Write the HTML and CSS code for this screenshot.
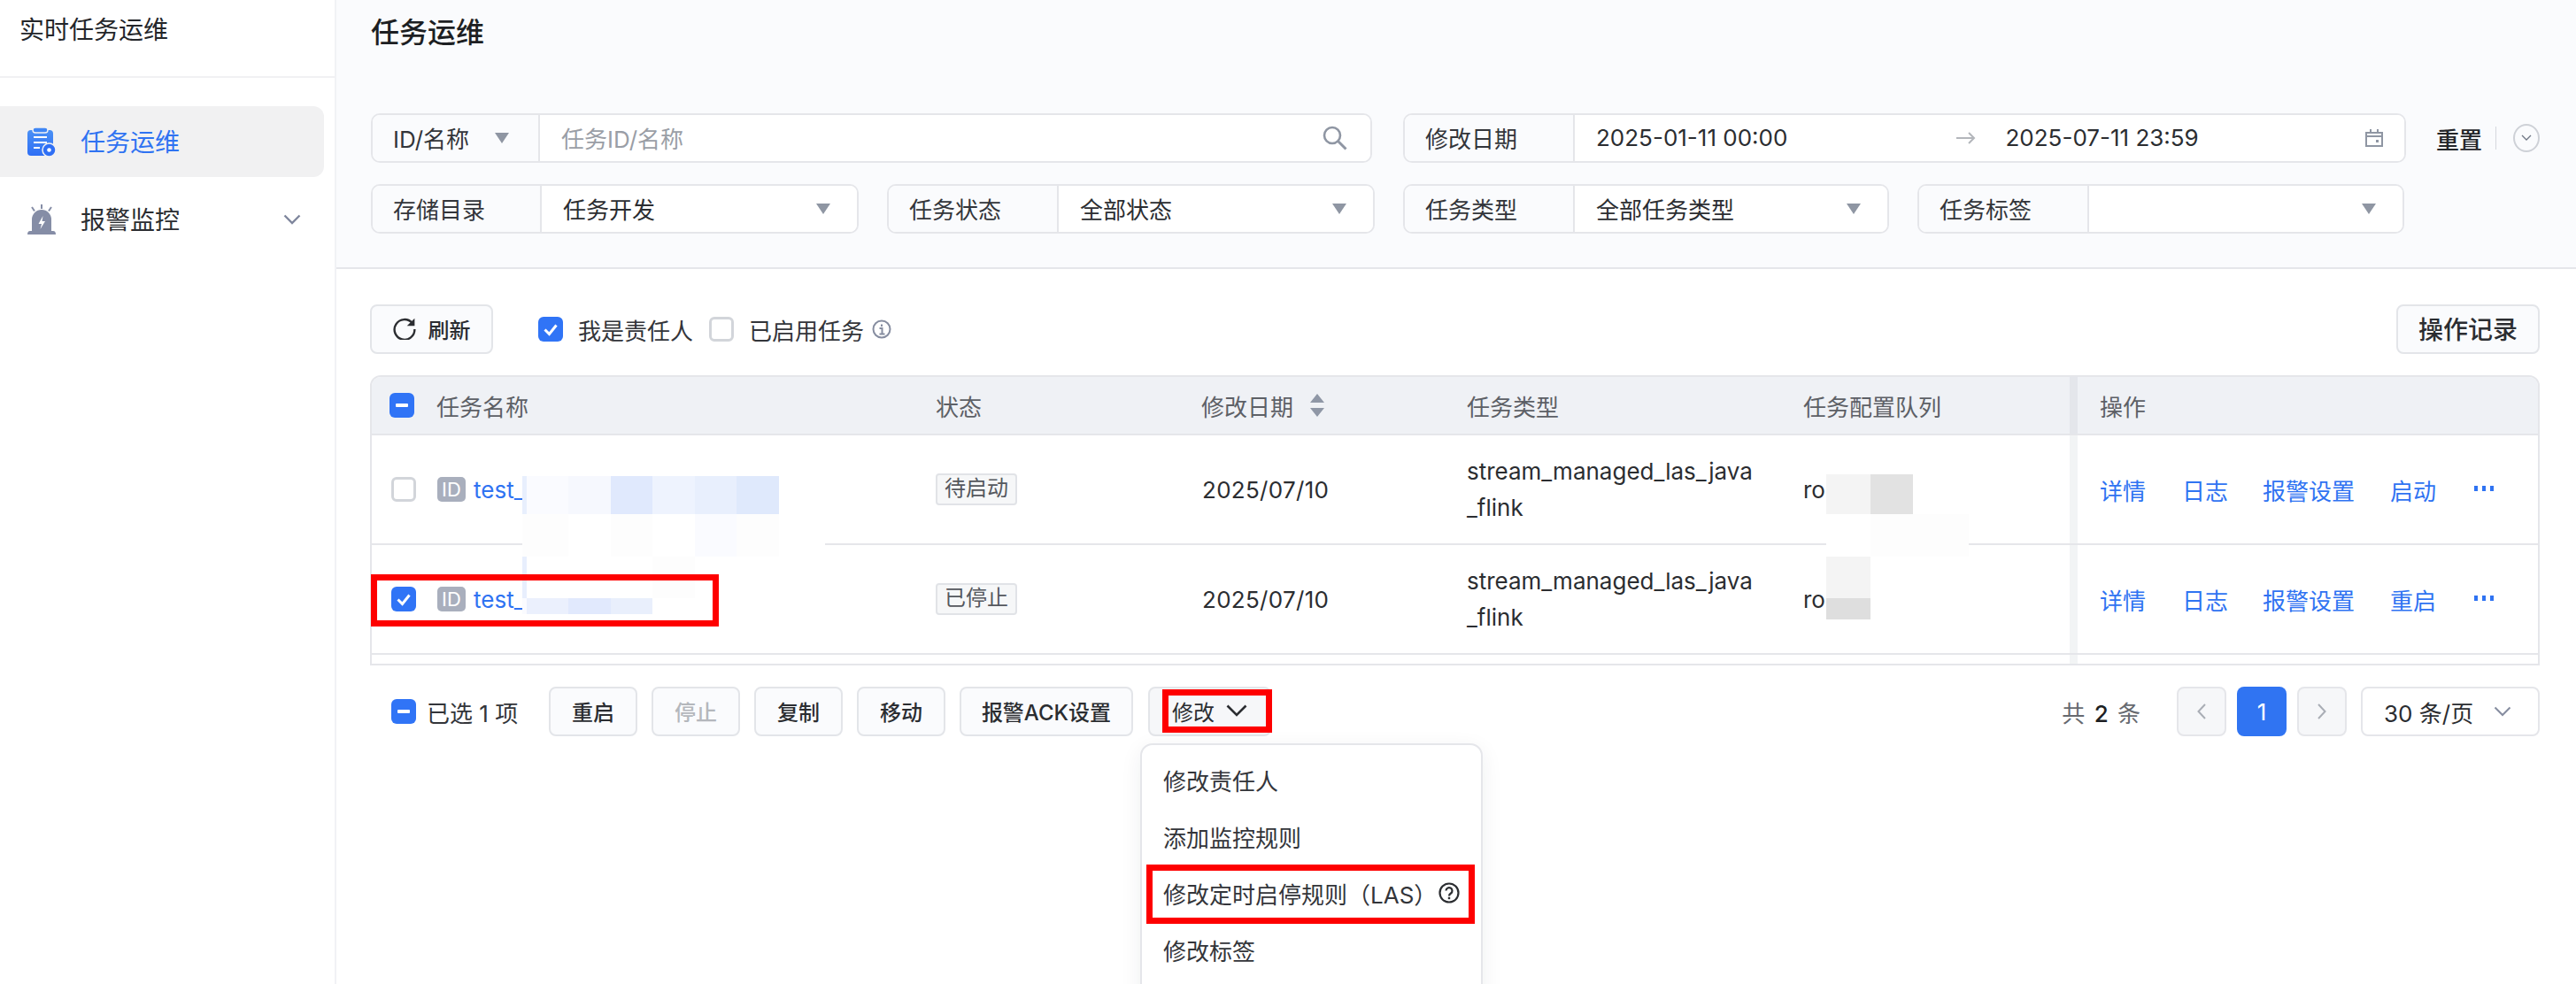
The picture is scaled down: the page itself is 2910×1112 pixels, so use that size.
FILE: index.html
```html
<!DOCTYPE html>
<html lang="zh-CN">
<head>
<meta charset="utf-8">
<title>实时任务运维</title>
<link rel="stylesheet" href="styles.css">
</head>
<body>
<div class="page">
  <aside class="sidebar">
    <div class="side-title">实时任务运维</div>
    <nav class="side-nav">
      <a class="side-item active">
        <svg class="side-icon" viewBox="0 0 32 32"><defs><linearGradient id="g" x1="0" y1="0" x2="0" y2="1"><stop offset="0" stop-color="#4a90f5"/><stop offset="1" stop-color="#2f6ff5"/></linearGradient></defs><rect x="0" y="3" width="29" height="29" rx="4" fill="url(#g)"/><rect x="6" y="0" width="17" height="6" rx="3" fill="#3f86f5" stroke="#f1f1f2" stroke-width="1.4"/><path d="M7 11h15M7 17h15M7 23h7" stroke="#fff" stroke-width="2" fill="none"/><circle cx="24.500" cy="25.500" r="7.500" fill="#2f6ff5" stroke="#f1f1f2" stroke-width="1.500"/><circle cx="24.500" cy="25.500" r="2.300" fill="#fff"/></svg>
        <span>任务运维</span>
      </a>
      <a class="side-item">
        <svg class="side-icon" viewBox="0 0 32 34"><path d="M16 0v5M5 3l3 4.500M27 3l-3 4.500" stroke="#858da6" stroke-width="2" fill="none"/><path d="M5 30V17a11 11 0 0 1 22 0v13z" fill="#858da6"/><path d="M0 34c0-2.500 1-4 3-4h26c2 0 3 1.500 3 4z" fill="#858da6"/><path d="M17.500 13l-5 9h3.500l-1.500 6 5.500-9h-3.500z" fill="#fff"/></svg>
        <span class="side-text">报警监控</span>
        <svg class="side-chev" viewBox="0 0 20 12"><path d="M1.500 1.500L10 10l8.500-8.500" stroke="#7f869d" stroke-width="2.400" fill="none"/></svg>
      </a>
    </nav>
  </aside>

  <main class="main">
    <section class="top">
      <h1 class="page-title">任务运维</h1>
      <div class="filter-row">
        <div class="group w-id">
          <div class="g-label l-id"><span>ID/名称</span><i class="tri"></i></div>
          <div class="g-value"><span class="placeholder">任务ID/名称</span>
            <svg class="search" viewBox="0 0 28 28"><circle cx="11" cy="11" r="9" fill="none" stroke="#8f96a3" stroke-width="2.600"/><path d="M17.500 17.500L26.500 26.500" stroke="#8f96a3" stroke-width="3"/></svg>
          </div>
        </div>
        <div class="group w-date">
          <div class="g-label l-std">修改日期</div>
          <div class="g-value date">
            <span class="d-from">2025-01-11 00:00</span>
            <svg class="d-arrow" viewBox="0 0 22 14"><path d="M0 7h20M14 1l6 6-6 6" stroke="#b3b6bb" stroke-width="2" fill="none"/></svg>
            <span class="d-to">2025-07-11 23:59</span>
            <svg class="cal" viewBox="0 0 20 20"><path d="M1 4h18v15H1zM1 8h18M6 0v4M14 0v4" stroke="#8f96a3" stroke-width="2" fill="none"/><rect x="12" y="12" width="3" height="3" fill="#8f96a3"/></svg>
          </div>
        </div>
        <div class="reset">
          <span class="reset-text">重置</span><i class="reset-sep"></i>
          <span class="circle"><svg viewBox="0 0 12 8"><path d="M1 1l5 5 5-5" stroke="#6f7684" stroke-width="1.300" fill="none"/></svg></span>
        </div>
      </div>
      <div class="filter-row row2">
        <div class="group w-a"><div class="g-label l-store">存储目录</div><div class="g-value"><span>任务开发</span><i class="tri end"></i></div></div>
        <div class="group w-a"><div class="g-label l-status">任务状态</div><div class="g-value"><span>全部状态</span><i class="tri end"></i></div></div>
        <div class="group w-b"><div class="g-label l-std">任务类型</div><div class="g-value"><span>全部任务类型</span><i class="tri end"></i></div></div>
        <div class="group w-c"><div class="g-label l-std">任务标签</div><div class="g-value"><i class="tri end"></i></div></div>
      </div>
    </section>

    <section class="content">
      <div class="toolbar">
        <button class="btn refresh"><svg viewBox="0 0 24 24"><path d="M20 6.500A10.500 10.500 0 1 0 22.500 13" stroke="#2b2d31" stroke-width="2.200" fill="none"/><path d="M22.500 1.500v8h-8z" fill="#2b2d31"/></svg>刷新</button>
        <label class="check-label first"><i class="cb on"><svg viewBox="0 0 28 28"><path d="M7.500 14.500l5 5 8-10" stroke="#fff" stroke-width="3" fill="none"/></svg></i><span>我是责任人</span></label>
        <label class="check-label"><i class="cb"></i><span>已启用任务</span></label>
        <svg class="info" viewBox="0 0 22 22"><circle cx="11" cy="11" r="9.500" fill="none" stroke="#868da0" stroke-width="2"/><path d="M11 5.500v2.400M8.500 10H11.500V16M8.500 16.500h6" stroke="#868da0" stroke-width="2" fill="none"/></svg>
        <button class="btn log">操作记录</button>
      </div>

      <div class="table">
        <div class="tr head">
          <div class="td name head-name"><i class="cb on"><b class="dash"></b></i><span class="name-title">任务名称</span></div>
          <div class="td">状态</div>
          <div class="td">修改日期<svg class="sort" viewBox="0 0 16 26"><path d="M8 0l8 10H0zM8 26l8-10H0z" fill="#8f97a6"/></svg></div>
          <div class="td">任务类型</div>
          <div class="td">任务配置队列</div>
          <div class="td ops">操作</div>
        </div>
        <div class="tr">
          <div class="td name"><i class="cb"></i><span class="id-badge">ID</span><a class="link">test_</a></div>
          <div class="td"><span class="tag">待启动</span></div>
          <div class="td date-cell">2025/07/10</div>
          <div class="td type">stream_managed_las_java<br>_flink</div>
          <div class="td">ro</div>
          <div class="td ops actions"><a>详情</a><a>日志</a><a>报警设置</a><a>启动</a><svg class="dots" viewBox="0 0 24 6"><path d="M1 0h4v6H1zM10 0h4v6h-4zM19 0h4v6h-4z" fill="#2f73f2"/></svg></div>
        </div>
        <div class="tr">
          <div class="td name"><i class="cb on"><svg viewBox="0 0 28 28"><path d="M7.500 14.500l5 5 8-10" stroke="#fff" stroke-width="3" fill="none"/></svg></i><span class="id-badge">ID</span><a class="link">test_</a></div>
          <div class="td"><span class="tag">已停止</span></div>
          <div class="td date-cell">2025/07/10</div>
          <div class="td type">stream_managed_las_java<br>_flink</div>
          <div class="td">ro</div>
          <div class="td ops actions"><a>详情</a><a>日志</a><a>报警设置</a><a>重启</a><svg class="dots" viewBox="0 0 24 6"><path d="M1 0h4v6H1zM10 0h4v6h-4zM19 0h4v6h-4z" fill="#2f73f2"/></svg></div>
        </div>
        <div class="tr filler"><div class="td fill-a"></div><div class="td ops"></div></div>
      </div>

      <div class="bottom">
        <i class="cb on"><b class="dash"></b></i>
        <span class="selected">已选 1 项</span>
        <button class="btn sm">重启</button>
        <button class="btn sm disabled">停止</button>
        <button class="btn sm">复制</button>
        <button class="btn sm">移动</button>
        <button class="btn sm ack">报警ACK设置</button>
        <button class="btn sm more">修改<svg viewBox="0 0 24 14"><path d="M1.500 1.500L12 12 22.500 1.500" stroke="#2b2d31" stroke-width="2.600" fill="none"/></svg></button>
        <div class="pager">
          <span class="total">共 <b>2</b> 条</span>
          <span class="pg off"><svg viewBox="0 0 10 18"><path d="M9 1L1.500 9 9 17" stroke="#a9adb5" stroke-width="2" fill="none"/></svg></span>
          <span class="pg cur">1</span>
          <span class="pg off"><svg viewBox="0 0 10 18"><path d="M1 1l7.500 8L1 17" stroke="#a9adb5" stroke-width="2" fill="none"/></svg></span>
          <span class="size">30 条/页<svg viewBox="0 0 20 12"><path d="M1.500 1.500L10 10l8.500-8.500" stroke="#868da0" stroke-width="2" fill="none"/></svg></span>
        </div>
      </div>
    </section>
  </main>

  <svg class="mosaic" viewBox="0 0 2910 1112" shape-rendering="crispEdges">
    <rect x="590" y="581" width="342" height="48" fill="#fff"/>
    <rect x="590" y="538" width="5" height="43" fill="#e8effd"/>
    <rect x="595" y="538" width="47" height="43" fill="#fafbff"/>
    <rect x="642" y="538" width="48" height="43" fill="#f6f8fe"/>
    <rect x="690" y="538" width="47" height="43" fill="#e0e9fd"/>
    <rect x="737" y="538" width="48" height="43" fill="#eef3fe"/>
    <rect x="785" y="538" width="47" height="43" fill="#e8effd"/>
    <rect x="832" y="538" width="48" height="43" fill="#dfe9fc"/>
    <rect x="590" y="581" width="52" height="48" fill="#fdfdfd"/>
    <rect x="690" y="581" width="47" height="48" fill="#fdfdfd"/>
    <rect x="785" y="581" width="47" height="48" fill="#fafbff"/>
    <rect x="832" y="581" width="48" height="48" fill="#fdfdfd"/>
    <rect x="590" y="629" width="5" height="47" fill="#e8effd"/>
    <rect x="737" y="629" width="48" height="47" fill="#fdfdfd"/>
    <rect x="590" y="676" width="5" height="18" fill="#fafbff"/>
    <rect x="595" y="676" width="47" height="18" fill="#ebf0fd"/>
    <rect x="642" y="676" width="48" height="18" fill="#e1e9fd"/>
    <rect x="690" y="676" width="47" height="18" fill="#e9effc"/>
    <rect x="2063" y="536" width="50" height="45" fill="#f4f4f4"/>
    <rect x="2113" y="536" width="48" height="45" fill="#e2e2e2"/>
    <rect x="2063" y="581" width="50" height="48" fill="#fff"/>
    <rect x="2113" y="581" width="111" height="48" fill="#fdfdfd"/>
    <rect x="2063" y="629" width="50" height="47" fill="#f4f4f4"/>
    <rect x="2063" y="676" width="50" height="24" fill="#dedede"/>
  </svg>

  <div class="dropdown">
    <div class="dd-item">修改责任人</div>
    <div class="dd-item">添加监控规则</div>
    <div class="dd-item">修改定时启停规则（LAS）<svg class="help" viewBox="0 0 24 24"><circle cx="12" cy="12" r="10.500" fill="none" stroke="#2b2d31" stroke-width="2.200"/><path d="M8.500 9.500a3.500 3.500 0 1 1 5.500 3c-1.300.9-2 1.500-2 3" stroke="#2b2d31" stroke-width="2.200" fill="none"/><rect x="10.800" y="16.800" width="2.400" height="2.400" fill="#2b2d31"/></svg></div>
    <div class="dd-item">修改标签</div>
  </div>

  <i class="mark mark-row"></i>
  <i class="mark mark-btn"></i>
  <i class="mark mark-item"></i>
</div>
</body>
</html>
```
FILE: styles.css
```css
* { box-sizing: border-box; }
html, body { margin: 0; height: 100%; overflow: hidden; background: #fff; }
body { font-family: "Inter", "Noto Sans CJK SC", sans-serif; font-size: 26px; color: #2b2d31; }
svg { display: block; flex: none; }
i { font-style: normal; display: block; }
button { font-family: inherit; }

.page { position: relative; display: flex; width: 2910px; height: 1112px; overflow: hidden; }

/* sidebar */
.sidebar { width: 380px; flex: none; border-right: 2px solid #f1f2f5; }
.side-title { height: 88px; padding: 15px 0 0 22px; font-size: 28px; line-height: 38px; border-bottom: 2px solid #f1f1f3; color: #24262a; }
.side-nav { padding-top: 32px; display: flex; flex-direction: column; gap: 8px; }
.side-item { display: flex; align-items: center; width: 366px; height: 80px; padding-left: 31px; font-size: 28px; border-radius: 0 12px 12px 0; }
.side-item span { padding-bottom: 2px; }
.side-item.active { background: #f1f1f2; color: #2f73f2; }
.side-icon { width: 32px; height: 34px; margin-right: 28px; }
.side-text { flex: 1; }
.side-chev { width: 20px; height: 12px; margin-right: 26px; }

/* main */
.main { flex: 1; min-width: 0; display: flex; flex-direction: column; }
.top { height: 304px; padding: 0 41px 0 39px; background: #fafbfd; border-bottom: 2px solid #e5e6ea; }
.page-title { margin: 0; height: 74px; font-size: 32px; line-height: 74px; font-weight: 500; color: #1d1f23; }
.filter-row { display: flex; margin-top: 54px; gap: 35px; }
.row2 { margin-top: 24px; gap: 32px; }

.group { display: flex; height: 56px; border: 2px solid #e5e6ea; border-radius: 10px; overflow: hidden; background: #fff; }
.w-id { width: 1131px; }
.w-date { width: 1133px; }
.w-a { width: 551px; }
.w-b { width: 549px; }
.w-c { width: 550px; }
.g-label { flex: none; display: flex; align-items: center; padding: 0 0 1px 23px; background: #fafbfd; border-right: 2px solid #e5e6ea; color: #33353a; }
.l-id { width: 189px; }
.l-id span { flex: 1; }
.l-id .tri { margin-right: 33px; }
.l-std { width: 192px; }
.l-store { width: 191px; }
.l-status { width: 192px; }
.g-value { flex: 1; display: flex; align-items: center; padding: 0 30px 1px 24px; background: #fff; min-width: 0; }
.g-value > span:first-child { flex: 1; }
.placeholder { color: #9a9ea6; }
.tri { width: 0; height: 0; border-left: 8px solid transparent; border-right: 8px solid transparent; border-top: 12px solid #8f96a3; flex: none; }
.tri.end { margin-left: auto; }
.search { width: 28px; height: 28px; margin-right: -4px; }
.date { padding-right: 24px; }
.date .d-from { flex: none; width: 408px; }
.d-arrow { width: 22px; height: 14px; margin-right: 34px; }
.date .d-to { flex: 1; }
.cal { width: 20px; height: 24px; }
.reset { display: flex; align-items: center; margin-left: -1px; }
.reset-text { font-weight: 500; font-size: 26px; margin-right: 15px; color: #24262a; }
.reset-sep { width: 1px; height: 26px; background: #d5d8dd; margin-right: 19px; }
.circle { width: 30px; height: 32px; border: 2px solid #ced1d7; border-radius: 50%; display: flex; align-items: center; justify-content: center; }
.circle svg { width: 12px; height: 8px; }

/* toolbar */
.content { padding: 40px 41px 0 38px; }
.toolbar { display: flex; align-items: center; height: 56px; }
.btn { display: inline-flex; align-items: center; justify-content: center; height: 56px; padding: 0 0 2px; border: 2px solid #e3e5e9; border-radius: 8px; background: #fafbfd; color: #2b2d31; font-size: 26px; font-weight: 500; }
.refresh { width: 139px; gap: 14px; font-size: 24px; }
.refresh svg { width: 26px; height: 26px; }
.log { width: 162px; margin-left: auto; font-size: 28px; }
.check-label { display: flex; align-items: center; gap: 17px; margin-right: 18px; color: #33353a; }
.first { margin-left: 51px; }
.cb { width: 28px; height: 28px; flex: none; border: 3px solid #d2d5da; border-radius: 6px; background: #fff; display: flex; align-items: center; justify-content: center; }
.cb.on { background: #3074f6; border: 0; }
.cb svg { width: 28px; height: 28px; }
.dash { width: 14px; height: 4px; background: #fff; border-radius: 1px; display: block; }
.info { width: 22px; height: 22px; margin-left: -9px; }

/* table */
.table { margin-top: 24px; border: 2px solid #e5e6ea; border-radius: 12px 12px 0 0; overflow: hidden; }
.tr { display: grid; grid-template-columns: 615px 300px 300px 380px 323px 1fr; height: 124px; border-bottom: 2px solid #e5e6ea; }
.tr.head { height: 66px; background: #eff1f5; color: #5d6066; }
.td { display: flex; align-items: center; padding-left: 22px; min-width: 0; }
.head-name { padding-left: 20px; }
.name-title { margin-left: 25px; }
.name .cb + .id-badge { margin-left: 24px; }
.sort { width: 16px; height: 26px; margin-left: 19px; }
.date-cell { padding-left: 23px; letter-spacing: .3px; }
.id-badge { width: 32px; height: 28px; border-radius: 5px; background: #a9afbd; color: #fff; font-size: 22px; line-height: 28px; text-align: center; flex: none; }
.link { margin-left: 9px; color: #2f73f2; }
.tag { height: 36px; padding: 0 8px; border: 2px solid #e1e3e7; border-radius: 4px; background: #f6f7f8; color: #55585e; font-size: 24px; line-height: 30px; }
.type { line-height: 41px; display: block; align-self: center; }
.ops { border-left: 9px solid #f2f4f5; padding-left: 25px; }
.head .ops { border-left-color: #e4e6eb; }
.actions { color: #2f73f2; }
.actions a:nth-child(1) { margin-right: 41px; }
.actions a:nth-child(2) { margin-right: 39px; }
.actions a:nth-child(3) { margin-right: 40px; }
.actions a:nth-child(4) { margin-right: 42px; }
.dots { width: 24px; height: 6px; margin-top: -2px; }
.tr.filler { height: 10px; border-bottom: 0; grid-template-columns: 1918px 1fr; }
.fill-a { padding: 0; }

/* bottom */
.bottom { display: flex; align-items: center; height: 56px; margin-top: 24px; padding-left: 24px; gap: 16px; }
.bottom > .cb { margin-right: -4px; }
.selected { margin-right: 17px; color: #33353a; width: 105px; white-space: nowrap; }
.sm { width: 100px; font-size: 24px; }
.ack { width: 196px; margin-right: 1px; }
.more { width: 139px; justify-content: flex-start; padding-left: 25px; gap: 13px; background: #f6f7f9; font-weight: 400; }
.more svg { width: 24px; height: 14px; margin-top: -1px; }
.disabled { color: #b4b7bc; }
.pager { margin-left: auto; display: flex; align-items: center; gap: 12px; }
.total { margin-right: 29px; color: #66696f; word-spacing: 3px; }
.total b { font-weight: 500; color: #1d1f23; }
.pg { width: 56px; height: 56px; border-radius: 8px; display: flex; align-items: center; justify-content: center; }
.pg svg { width: 10px; height: 18px; }
.off { background: #f6f7f9; border: 2px solid #e5e6ea; }
.cur { background: #3074f2; color: #fff; }
.size { width: 202px; height: 56px; margin-left: 4px; padding: 0 30px 0 24px; border: 2px solid #e5e6ea; border-radius: 8px; display: flex; align-items: center; justify-content: space-between; background: #fff; }
.size svg { width: 20px; height: 12px; }

/* overlays */
.mosaic { position: absolute; left: 0; top: 0; width: 2910px; height: 1112px; pointer-events: none; }
.dropdown { position: absolute; left: 1288px; top: 840px; width: 387px; height: 320px; padding-top: 7px; background: #fff; border: 2px solid #e5e6ea; border-radius: 14px; box-shadow: 0 6px 24px rgba(30, 40, 60, .07); }
.dd-item { height: 64px; padding-left: 24px; display: flex; align-items: center; white-space: nowrap; color: #33353a; }
.help { width: 24px; height: 24px; margin-left: 2px; }
.mark { position: absolute; border: 7px solid #fe0000; }
.mark-row { left: 419px; top: 649px; width: 393px; height: 59px; }
.mark-btn { left: 1313px; top: 779px; width: 124px; height: 49px; }
.mark-item { left: 1295px; top: 977px; width: 371px; height: 67px; }
```
